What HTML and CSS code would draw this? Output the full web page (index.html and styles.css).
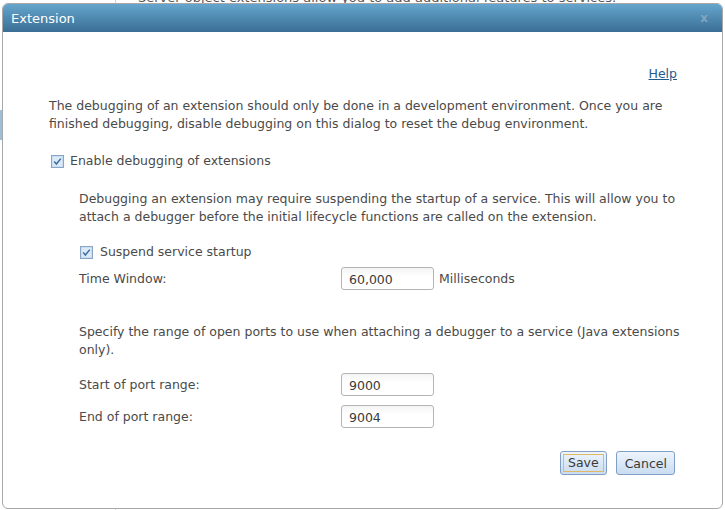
FILE: index.html
```html
<!DOCTYPE html>
<html>
<head>
<meta charset="utf-8">
<link rel="stylesheet" href="styles.css">
</head>
<body>
<div class="page">
  <div class="page-side"><div class="side-tab"></div></div>
  <div class="page-main">Server object extensions allow you to add additional features to services.</div>
</div>
<div class="dialog">
  <div class="dlg-head">
    <span class="dlg-title">Extension</span>
    <span class="dlg-close">x</span>
  </div>
  <div class="dlg-body">
    <div class="help-row"><a class="help" href="#">Help</a></div>
    <p class="intro">The debugging of an extension should only be done in a development environment. Once you are finished debugging, disable debugging on this dialog to reset the debug environment.</p>
    <label class="check-row"><span class="cb"><svg viewBox="0 0 13 13" width="13" height="13"><rect x="0.5" y="0.5" width="12" height="12" fill="#b9d3ec" stroke="#8aa6c4"/><rect x="1.5" y="1.5" width="10" height="10" fill="#dce9f6"/><path d="M3.2 6.6 L5.4 9 L9.8 3.6" fill="none" stroke="#3c6da3" stroke-width="1.5"/></svg></span>Enable debugging of extensions</label>
    <div class="sub">
      <p class="desc">Debugging an extension may require suspending the startup of a service. This will allow you to attach a debugger before the initial lifecycle functions are called on the extension.</p>
      <label class="check-row check-sub"><span class="cb"><svg viewBox="0 0 13 13" width="13" height="13"><rect x="0.5" y="0.5" width="12" height="12" fill="#b9d3ec" stroke="#8aa6c4"/><rect x="1.5" y="1.5" width="10" height="10" fill="#dce9f6"/><path d="M3.2 6.6 L5.4 9 L9.8 3.6" fill="none" stroke="#3c6da3" stroke-width="1.5"/></svg></span>Suspend service startup</label>
      <div class="field-row field-time">
        <span class="field-label">Time Window:</span>
        <span class="input">60,000</span>
        <span class="unit">Milliseconds</span>
      </div>
      <p class="desc ports">Specify the range of open ports to use when attaching a debugger to a service (Java extensions only).</p>
      <div class="field-row field-start">
        <span class="field-label">Start of port range:</span>
        <span class="input">9000</span>
      </div>
      <div class="field-row field-end">
        <span class="field-label">End of port range:</span>
        <span class="input">9004</span>
      </div>
    </div>
    <div class="buttons">
      <button class="btn btn-focus"><span class="focus-ring">Save</span></button>
      <button class="btn btn-cancel">Cancel</button>
    </div>
  </div>
</div>
</body>
</html>
```
FILE: styles.css
```css
html, body {
  margin: 0;
  padding: 0;
  background: #ffffff;
  width: 725px;
  height: 510px;
  overflow: hidden;
  font-family: "DejaVu Sans", Verdana, sans-serif;
}

.page {
  display: flex;
  height: 510px;
}
.page-side {
  width: 115px;
  border-right: 1px solid #d0d0d0;
  padding-top: 110px;
}
.side-tab {
  width: 3px;
  height: 30px;
  background: #9fbfd8;
}
.page-main {
  padding: 0 0 0 22px;
  margin-top: -10px;
  font-size: 13px;
  color: #555;
}

.dialog {
  position: absolute;
  left: 2px;
  top: 3px;
  width: 719px;
  height: 504px;
  border: 1px solid #a8a8a8;
  border-radius: 6px;
  background: #ffffff;
  overflow: hidden;
  display: flex;
  flex-direction: column;
}
.dlg-head {
  height: 28px;
  flex: none;
  background: linear-gradient(#65a5cd, #3a6e94);
  display: flex;
  align-items: center;
  justify-content: space-between;
  padding: 0 14px 0 8px;
}
.dlg-title {
  color: #ffffff;
  font-size: 13px;
}
.dlg-close {
  color: #7fa5c0;
  font-size: 12px;
  font-weight: bold;
  text-shadow: 0 0 1px #5a87a8;
}

.dlg-body {
  padding: 34px 45px 0 46px;
  font-size: 12.5px;
  color: #4a4a4a;
  flex: 1;
}
.help-row {
  display: flex;
  justify-content: flex-end;
  line-height: 16px;
}
.help {
  color: #1f5c8c;
  text-decoration: underline;
}
p { margin: 0; }
.intro {
  margin-top: 15px;
  line-height: 18px;
}
.check-row {
  display: flex;
  align-items: center;
  gap: 6px;
  margin-top: 20px;
  line-height: 16px;
}
.cb {
  display: flex;
  width: 13px;
  height: 13px;
  margin-left: 2px;
}
.sub {
  padding-left: 30px;
  margin-right: -14px;
}
.desc {
  margin-top: 21px;
  line-height: 18px;
}
.check-sub {
  margin-top: 18px;
  margin-left: -1px;
  gap: 7px;
}
.field-row {
  display: flex;
  align-items: center;
}
.field-time { margin-top: 7px; }
.field-start { margin-top: 14px; }
.field-end { margin-top: 9px; }
.field-label {
  width: 262px;
}
.input {
  width: 84px;
  height: 21px;
  border: 1px solid #b4b4b4;
  border-radius: 3px;
  background: linear-gradient(#f4f4f4, #ffffff 40%);
  box-sizing: content-box;
  padding-left: 7px;
  line-height: 23px;
  font-size: 12.5px;
  color: #3a3a3a;
}
.unit {
  margin-left: 5px;
}
.ports { margin-top: 33px; }

.buttons {
  display: flex;
  justify-content: flex-end;
  gap: 9px;
  margin-top: 23px;
  padding-right: 2px;
}
.btn {
  height: 24px;
  border: 1px solid #7f9fc6;
  border-radius: 3px;
  background: linear-gradient(#eef5fc, #c9dcf1);
  font-family: "DejaVu Sans", Verdana, sans-serif;
  font-size: 12.5px;
  color: #3a3a3a;
  padding: 0 6px;
}
.btn-cancel {
  padding: 0 7px 0 8px;
}
.btn-focus {
  padding: 2px;
}
.focus-ring {
  display: block;
  border: 1px solid #e1b864;
  padding: 0 4px;
  line-height: 16px;
}
```
